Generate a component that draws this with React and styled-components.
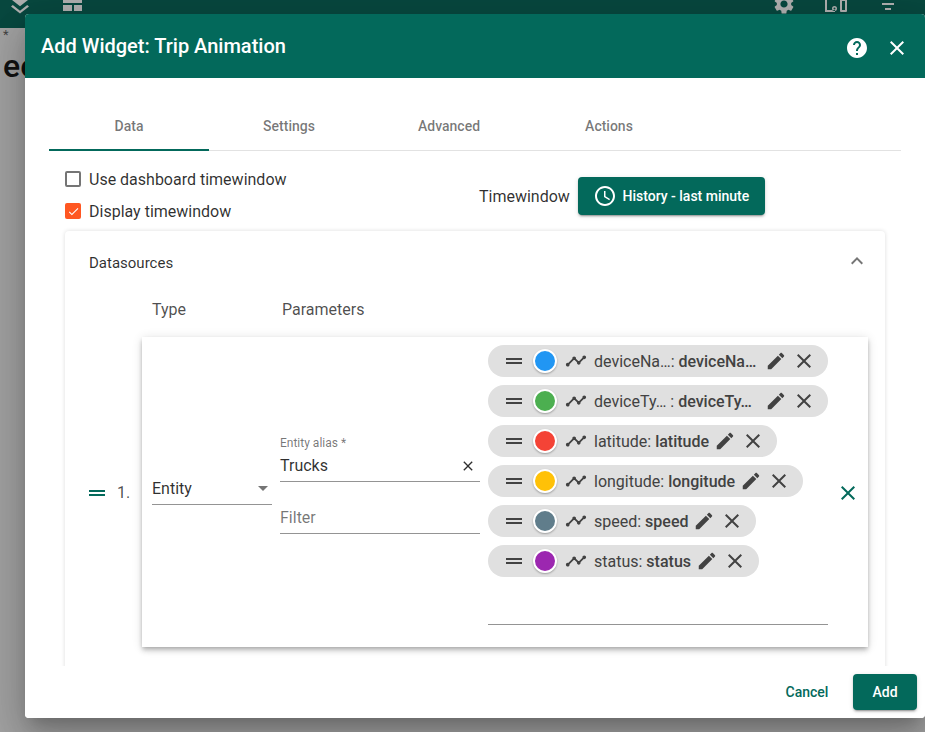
import styled, { createGlobalStyle } from 'styled-components';

const GlobalStyle = createGlobalStyle`
  html, body {
    margin: 0;
    padding: 0;
    height: 100%;
    overflow: hidden;
  }
  body {
    font-family: Roboto, 'Liberation Sans', sans-serif;
    color: rgba(0, 0, 0, 0.87);
  }
`;

const paths = {
  drag: 'M20 9H4v2h16V9zM4 15h16v-2H4v2z',
  timeline: 'M23 8c0 1.1-.9 2-2 2-.18 0-.35-.02-.51-.07l-3.56 3.55c.05.16.07.34.07.52 0 1.1-.9 2-2 2s-2-.9-2-2c0-.18.02-.36.07-.52l-2.55-2.55c-.16.05-.34.07-.52.07s-.36-.02-.52-.07l-4.55 4.56c.05.16.07.33.07.51 0 1.1-.9 2-2 2s-2-.9-2-2 .9-2 2-2c.18 0 .35.02.51.07l4.56-4.55C8.02 9.36 8 9.18 8 9c0-1.1.9-2 2-2s2 .9 2 2c0 .18-.02.36-.07.52l2.55 2.55c.16-.05.34-.07.52-.07s.36.02.52.07l3.55-3.56C19.02 8.35 19 8.18 19 8c0-1.1.9-2 2-2s2 .9 2 2z',
  edit: 'M3 17.25V21h3.75L17.81 9.94l-3.75-3.75L3 17.25zM20.71 7.04c.39-.39.39-1.02 0-1.41l-2.34-2.34c-.39-.39-1.02-.39-1.41 0l-1.83 1.83 3.75 3.75 1.83-1.83z',
  close: 'M19 6.41L17.59 5 12 10.59 6.41 5 5 6.41 10.59 12 5 17.59 6.41 19 12 13.41 17.59 19 19 17.59 13.41 12z',
  help: 'M12 2C6.48 2 2 6.48 2 12s4.48 10 10 10 10-4.48 10-10S17.52 2 12 2zm1 17h-2v-2h2v2zm2.07-7.75l-.9.92C13.45 12.9 13 13.5 13 15h-2v-.5c0-1.1.45-2.1 1.17-2.83l1.24-1.26c.37-.36.59-.86.59-1.41 0-1.1-.9-2-2-2s-2 .9-2 2H8c0-2.21 1.79-4 4-4s4 1.79 4 4c0 .88-.36 1.68-.93 2.25z',
  clock: 'M11.99 2C6.47 2 2 6.48 2 12s4.47 10 9.99 10C17.52 22 22 17.52 22 12S17.52 2 11.99 2zM12 20c-4.42 0-8-3.58-8-8s3.58-8 8-8 8 3.58 8 8-3.58 8-8 8zm.5-13H11v6l5.25 3.15.75-1.23-4.5-2.67z',
  gear: 'M19.14 12.94c.04-.3.06-.61.06-.94 0-.32-.02-.64-.07-.94l2.03-1.58c.18-.14.23-.41.12-.61l-1.92-3.32c-.12-.22-.37-.29-.59-.22l-2.39.96c-.5-.38-1.03-.7-1.62-.94l-.36-2.54c-.04-.24-.24-.41-.48-.41h-3.84c-.24 0-.43.17-.47.41l-.36 2.54c-.59.24-1.13.57-1.62.94l-2.39-.96c-.22-.08-.47 0-.59.22L2.74 8.87c-.12.21-.08.47.12.61l2.03 1.58c-.05.3-.09.63-.09.94s.02.64.07.94l-2.03 1.58c-.18.14-.23.41-.12.61l1.92 3.32c.12.22.37.29.59.22l2.39-.96c.5.38 1.03.7 1.62.94l.36 2.54c.05.24.24.41.48.41h3.84c.24 0 .44-.17.47-.41l.36-2.54c.59-.24 1.13-.56 1.62-.94l2.39.96c.22.08.47 0 .59-.22l1.92-3.32c.12-.22.07-.47-.12-.61l-2.01-1.58zM12 15.6c-1.98 0-3.6-1.62-3.6-3.6s1.62-3.6 3.6-3.6 3.6 1.62 3.6 3.6-1.62 3.6-3.6 3.6z',
  layers: 'M12 14.2 3 7.2 12 0l9 7.2-9 7zM12 21.5 3 14.5l1.8-1.4 7.2 5.6 7.2-5.6 1.8 1.4-9 7z',
  layout: 'M3 4h19v7H3V4zm0 9h9v6H3v-6zm11 0h8v6h-8v-6z',
  devices: 'M1 0h2v18h8v2H1V0zm9.5 14a2.5 2.5 0 1 0 0 5 2.5 2.5 0 0 0 0-5zm0 1.5a1 1 0 1 1 0 2 1 1 0 0 1 0-2zM17 7h5a1 1 0 0 1 1 1v11a1 1 0 0 1-1 1h-5a1 1 0 0 1-1-1V8a1 1 0 0 1 1-1zm1 2v9h3V9h-3z',
  filter: 'M9 18h6v-2H9v2zM6 13h12v-2H6v2z',
  check: 'M9 16.2 4.8 12l-1.4 1.4L9 19 21 7l-1.4-1.4L9 16.2z',
  expand: 'M12 8l-6 6 1.41 1.41L12 10.83l4.59 4.58L18 14z',
};

const Icon = ({ name, size = 24, color = 'currentColor' }) => (
  <svg width={size} height={size} viewBox="0 0 24 24" fill={color} fillRule="evenodd" style={{ flex: 'none', display: 'block' }}>
    <path d={paths[name]} />
  </svg>
);

const Page = styled.div`
  position: relative;
  width: 925px;
  height: 732px;
  overflow: hidden;
  background: #a2a2a2;
`;

const TopBar = styled.div`
  height: 28px;
  background: #08483f;
  display: flex;
  justify-content: space-between;
  overflow: hidden;
  color: #b0b0b0;
`;

const TopGroup = styled.div`
  display: flex;
  gap: ${(p) => p.$gap}px;
  padding: 0 ${(p) => p.$pad}px;
  margin-top: -8px;
`;

const BackText = styled.div`
  padding-left: 3px;
  color: #111;
`;

const Star = styled.div`
  font-size: 13px;
  line-height: 13px;
  color: #444;
`;

const BigText = styled.div`
  font-size: 32px;
  font-weight: 500;
  line-height: 44px;
  margin-top: 3px;
`;

const Dialog = styled.div`
  position: absolute;
  left: 25px;
  top: 14px;
  width: 900px;
  height: 704px;
  display: flex;
  flex-direction: column;
  background: #fff;
  border-radius: 4px;
  overflow: hidden;
`;

const DialogShadow = styled.div`
  position: absolute;
  left: 25px;
  top: 14px;
  width: 900px;
  height: 704px;
  border-radius: 4px;
  box-shadow: 0 11px 15px -7px rgba(0, 0, 0, 0.2), 0 24px 38px 3px rgba(0, 0, 0, 0.14), 0 9px 46px 8px rgba(0, 0, 0, 0.12);
`;

const Header = styled.div`
  flex: none;
  height: 64px;
  background: #03695b;
  color: #fff;
  display: flex;
  align-items: center;
  padding: 0 16px;
`;

const Title = styled.h2`
  flex: 1;
  margin: 0;
  font-size: 20px;
  font-weight: 500;
`;

const HeaderActions = styled.div`
  display: flex;
  gap: 16px;
  margin-top: 4px;
`;

const Body = styled.div`
  flex: 1;
  min-height: 0;
  overflow: hidden;
  padding-top: 25px;
`;

const Tabs = styled.div`
  margin: 0 24px;
  height: 48px;
  display: flex;
  border-bottom: 1px solid #e2e2e2;
  box-sizing: border-box;
`;

const Tab = styled.div`
  width: 160px;
  display: flex;
  align-items: center;
  justify-content: center;
  font-size: 14px;
  font-weight: 500;
  color: rgba(0, 0, 0, 0.54);
  box-sizing: border-box;
  height: 48px;
  border-bottom: 2px solid ${(p) => (p.$active ? '#03695b' : 'transparent')};
`;

const Options = styled.div`
  display: flex;
  align-items: center;
  padding: 12px 40px 4px;
  height: 64px;
`;

const CheckColumn = styled.div`
  width: 414px;
  display: flex;
  flex-direction: column;
  gap: 8px;
`;

const CheckRow = styled.div`
  display: flex;
  align-items: center;
  gap: 8px;
  height: 24px;
  font-size: 16px;
  color: rgba(0, 0, 0, 0.82);
`;

const CheckBox = styled.span`
  width: 16px;
  height: 16px;
  box-sizing: border-box;
  border-radius: 2px;
  display: flex;
  align-items: center;
  justify-content: center;
  background: ${(p) => (p.$checked ? '#ff5722' : 'transparent')};
  border: ${(p) => (p.$checked ? 'none' : '2px solid rgba(0, 0, 0, 0.54)')};
`;

const TimeGroup = styled.div`
  display: flex;
  align-items: center;
  gap: 8px;
  margin-top: 2px;
  font-size: 16px;
  color: rgba(0, 0, 0, 0.82);
`;

const TimeButton = styled.button`
  height: 38px;
  width: 187px;
  display: flex;
  align-items: center;
  justify-content: center;
  gap: 5px;
  border: 0;
  border-radius: 4px;
  padding: 0;
  background: #03695b;
  color: #fff;
  font-family: inherit;
  font-size: 14px;
  font-weight: 500;
  box-shadow: 0 3px 1px -2px rgba(0, 0, 0, 0.2), 0 2px 2px 0 rgba(0, 0, 0, 0.14), 0 1px 5px 0 rgba(0, 0, 0, 0.12);
`;

const Panel = styled.div`
  margin: 0 40px;
  height: 500px;
  background: #fff;
  border-radius: 4px;
  box-shadow: 0 0 4px rgba(0, 0, 0, 0.14);
`;

const PanelHeader = styled.div`
  height: 64px;
  display: flex;
  align-items: center;
  justify-content: space-between;
  padding: 0 16px 0 24px;
  font-size: 15px;
  color: rgba(0, 0, 0, 0.82);
`;

const Collapse = styled.span`
  margin-bottom: 4px;
`;

const Columns = styled.div`
  display: flex;
  height: 28px;
  box-sizing: border-box;
  padding: 5px 0 0 87px;
  font-size: 16px;
  color: rgba(0, 0, 0, 0.7);
`;

const ColumnName = styled.div`
  width: ${(p) => p.$width}px;
`;

const Row = styled.div`
  display: flex;
  align-items: center;
  margin-top: 14px;
  padding-left: 20px;
`;

const RowHandle = styled.span`
  margin-top: 1px;
  color: #03695b;
`;

const RowIndex = styled.div`
  width: 33px;
  flex: none;
  padding-left: 8px;
  box-sizing: border-box;
  font-size: 16px;
  color: rgba(0, 0, 0, 0.7);
`;

const RowCard = styled.div`
  width: 726px;
  height: 310px;
  box-sizing: border-box;
  flex: none;
  display: flex;
  align-items: flex-start;
  padding: 8px 40px 0 10px;
  background: #fff;
  box-shadow: 0 2px 4px -1px rgba(0, 0, 0, 0.2), 0 4px 5px 0 rgba(0, 0, 0, 0.14), 0 1px 10px 0 rgba(0, 0, 0, 0.12);
`;

const RemoveRow = styled.div`
  position: absolute;
  left: 811px;
  top: 467px;
  color: #03695b;
`;

const SelectBox = styled.div`
  width: 120px;
  height: 32px;
  margin-top: 128px;
  flex: none;
  box-sizing: border-box;
  border-bottom: 1px solid rgba(0, 0, 0, 0.42);
  display: flex;
  align-items: center;
  justify-content: space-between;
  font-size: 16px;
  color: rgba(0, 0, 0, 0.82);
`;

const Caret = styled.span`
  width: 0;
  height: 0;
  margin-right: 4px;
  border-left: 5px solid transparent;
  border-right: 5px solid transparent;
  border-top: 5px solid rgba(0, 0, 0, 0.54);
`;

const Fields = styled.div`
  width: 200px;
  flex: none;
  margin: 91px 8px 0;
`;

const FieldLabel = styled.div`
  font-size: 12px;
  line-height: 14px;
  color: rgba(0, 0, 0, 0.54);
`;

const Field = styled.div`
  height: ${(p) => p.$height}px;
  margin-bottom: ${(p) => p.$gap || 0}px;
  box-sizing: border-box;
  border-bottom: 1px solid rgba(0, 0, 0, 0.42);
  display: flex;
  align-items: center;
  justify-content: space-between;
  padding-right: 4px;
  font-size: 16px;
  color: ${(p) => (p.$muted ? 'rgba(0, 0, 0, 0.54)' : 'rgba(0, 0, 0, 0.82)')};
`;

const ChipColumn = styled.div`
  width: 340px;
  flex: none;
`;

const ChipList = styled.div`
  display: flex;
  flex-direction: column;
  align-items: flex-start;
  gap: 8px;
`;

const ChipInput = styled.div`
  height: 39px;
  margin-top: 8px;
  border-bottom: 1px solid rgba(0, 0, 0, 0.42);
`;

const Chip = styled.div`
  height: 32px;
  display: flex;
  align-items: center;
  padding: 0 12px 0 14px;
  border-radius: 16px;
  background: #e0e0e0;
  color: #424242;
  font-size: 16px;
  white-space: nowrap;
`;

const Dot = styled.span`
  width: 24px;
  height: 24px;
  box-sizing: border-box;
  margin: 0 8px 0 7px;
  border-radius: 50%;
  border: 2px solid #fff;
  background: ${(p) => p.$color};
  box-shadow: 0 1px 2px rgba(0, 0, 0, 0.3);
  flex: none;
`;

const ChipText = styled.span`
  min-width: ${(p) => p.$width || 0}px;
  margin: 0 5px 0 7px;
  white-space: pre;
`;

const Strong = styled.strong`
  font-weight: 500;
`;

const ChipClose = styled.span`
  margin-left: 5px;
`;

const Footer = styled.div`
  flex: none;
  height: 52px;
  box-sizing: border-box;
  display: flex;
  align-items: center;
  justify-content: flex-end;
  gap: 14px;
  padding: 0 8px;
  background: #fff;
`;

const CancelButton = styled.button`
  width: 64px;
  height: 36px;
  padding: 0;
  border: 0;
  background: transparent;
  color: #03695b;
  font-family: inherit;
  font-size: 14px;
  font-weight: 500;
`;

const AddButton = styled(CancelButton)`
  background: #03695b;
  color: #fff;
  border-radius: 4px;
  box-shadow: 0 3px 1px -2px rgba(0, 0, 0, 0.2), 0 2px 2px 0 rgba(0, 0, 0, 0.14), 0 1px 5px 0 rgba(0, 0, 0, 0.12);
`;

const keys = [
  { color: '#2196f3', name: 'deviceNa…: ', value: 'deviceNa…', width: 166 },
  { color: '#4caf50', name: 'deviceTy… : ', value: 'deviceTy…', width: 166 },
  { color: '#f44336', name: 'latitude: ', value: 'latitude' },
  { color: '#ffc107', name: 'longitude: ', value: 'longitude' },
  { color: '#607d8b', name: 'speed: ', value: 'speed' },
  { color: '#9c27b0', name: 'status: ', value: 'status' },
];

const KeyChip = ({ item }) => (
  <Chip>
    <Icon name="drag" />
    <Dot $color={item.color} />
    <Icon name="timeline" size={22} />
    <ChipText $width={item.width}>
      {item.name}
      <Strong>{item.value}</Strong>
    </ChipText>
    <Icon name="edit" size={22} />
    <ChipClose>
      <Icon name="close" />
    </ChipClose>
  </Chip>
);

export default function App() {
  return (
    <Page>
      <GlobalStyle />
      <TopBar>
        <TopGroup $gap={28} $pad={8}>
          <Icon name="layers" />
          <Icon name="layout" />
        </TopGroup>
        <TopGroup $gap={28} $pad={25}>
          <Icon name="gear" />
          <Icon name="devices" />
          <Icon name="filter" />
        </TopGroup>
      </TopBar>
      <BackText>
        <Star>*</Star>
        <BigText>ee</BigText>
      </BackText>
      <DialogShadow />
      <Dialog>
        <Header>
          <Title>Add Widget: Trip Animation</Title>
          <HeaderActions>
            <Icon name="help" />
            <Icon name="close" />
          </HeaderActions>
        </Header>
        <Body>
          <Tabs>
            <Tab $active>Data</Tab>
            <Tab>Settings</Tab>
            <Tab>Advanced</Tab>
            <Tab>Actions</Tab>
          </Tabs>
          <Options>
            <CheckColumn>
              <CheckRow>
                <CheckBox />
                Use dashboard timewindow
              </CheckRow>
              <CheckRow>
                <CheckBox $checked>
                  <Icon name="check" size={13} color="#fff" />
                </CheckBox>
                Display timewindow
              </CheckRow>
            </CheckColumn>
            <TimeGroup>
              Timewindow
              <TimeButton>
                <Icon name="clock" />
                History - last minute
              </TimeButton>
            </TimeGroup>
          </Options>
          <Panel>
            <PanelHeader>
              Datasources
              <Collapse>
                <Icon name="expand" color="rgba(0,0,0,0.54)" />
              </Collapse>
            </PanelHeader>
            <Columns>
              <ColumnName $width={130}>Type</ColumnName>
              <ColumnName $width={200}>Parameters</ColumnName>
            </Columns>
            <Row>
              <RowHandle>
                <Icon name="drag" />
              </RowHandle>
              <RowIndex>1.</RowIndex>
              <RowCard>
                <SelectBox>
                  Entity
                  <Caret />
                </SelectBox>
                <Fields>
                  <FieldLabel>Entity alias *</FieldLabel>
                  <Field $height={32} $gap={20}>
                    Trucks
                    <Icon name="close" size={16} />
                  </Field>
                  <Field $height={32} $muted>Filter</Field>
                </Fields>
                <ChipColumn>
                  <ChipList>
                    {keys.map((item) => (
                      <KeyChip key={item.color} item={item} />
                    ))}
                  </ChipList>
                  <ChipInput />
                </ChipColumn>
              </RowCard>
            </Row>
          </Panel>
        </Body>
        <Footer>
          <CancelButton>Cancel</CancelButton>
          <AddButton>Add</AddButton>
        </Footer>
        <RemoveRow>
          <Icon name="close" />
        </RemoveRow>
      </Dialog>
    </Page>
  );
}
